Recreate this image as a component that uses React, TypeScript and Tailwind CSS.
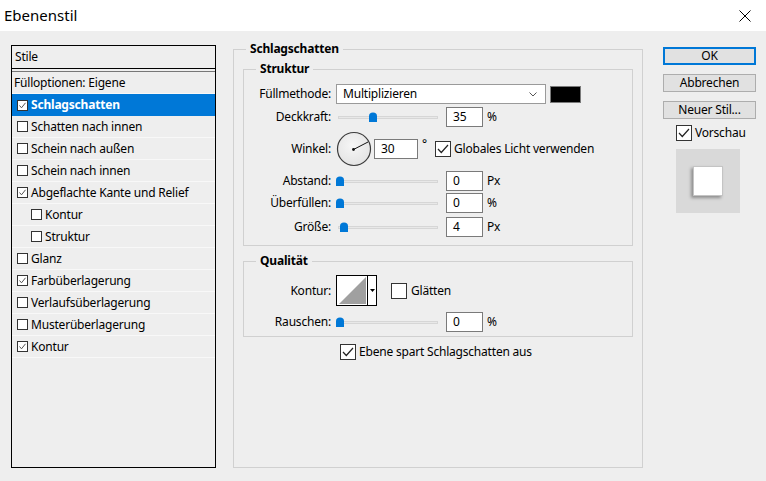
import React from "react";

function Box({ small = false, checked = false }: { small?: boolean; checked?: boolean }) {
  if (small) {
    return (
      <span className="inline-flex shrink-0 items-center justify-center w-[11px] h-[11px] bg-white border border-[#333333]">
        {checked && (
          <svg width="9" height="9" viewBox="0 0 9 9">
            <polyline points="1.5,4.5 3.5,6.8 7.5,1.8" fill="none" stroke="#555555" strokeWidth="1" />
          </svg>
        )}
      </span>
    );
  }
  return (
    <span className="inline-flex shrink-0 items-center justify-center w-[16px] h-[16px] bg-white border border-[#333333]">
      {checked && (
        <svg width="14" height="14" viewBox="0 0 14 14">
          <polyline points="2,7 5.3,10.5 12,3" fill="none" stroke="#222222" strokeWidth="1.2" />
        </svg>
      )}
    </span>
  );
}

function Slider({ pos }: { pos: number }) {
  return (
    <div className="relative w-[102px] h-[20px] flex items-center shrink-0">
      <div className="ml-[2px] w-[100px] h-[3px] bg-[#e8e8e8] border border-[#d6d6d6]" />
      <svg className="absolute top-[5px]" style={{ left: pos }} width="8" height="10" viewBox="0 0 8 10">
        <path d="M0 4 Q0 0.5 4 0.5 Q8 0.5 8 4 V10 H0 Z" fill="#0078d7" />
      </svg>
    </div>
  );
}

function NumInput({ value, w = "w-[37px]" }: { value: string; w?: string }) {
  return (
    <div className={`${w} h-[20px] bg-white border border-[#7a7a7a] pl-[6px] flex items-center shrink-0 leading-none`}>
      {value}
    </div>
  );
}

function Row({ label, className, children }: { label: string; className: string; children: React.ReactNode }) {
  return (
    <div className={`flex items-center ${className}`}>
      <span className="w-[87px] text-right shrink-0">{label}</span>
      <div className="ml-[5px] flex items-center">{children}</div>
    </div>
  );
}

const items: { label: string; checked?: boolean; indent?: boolean; selected?: boolean }[] = [
  { label: "Schlagschatten", checked: true, selected: true },
  { label: "Schatten nach innen" },
  { label: "Schein nach außen" },
  { label: "Schein nach innen" },
  { label: "Abgeflachte Kante und Relief", checked: true },
  { label: "Kontur", indent: true },
  { label: "Struktur", indent: true },
  { label: "Glanz" },
  { label: "Farbüberlagerung", checked: true },
  { label: "Verlaufsüberlagerung" },
  { label: "Musterüberlagerung" },
  { label: "Kontur", checked: true },
];

function LeftList() {
  return (
    <div className="mt-[14px] w-[205px] h-[423px] border border-black flex flex-col shrink-0">
      <div className="h-[22px] pl-[3px] flex items-center">Stile</div>
      <div className="h-[1px] bg-black" />
      <div className="h-[2px]" />
      <div className="h-[1px] bg-[#777777]" />
      <div className="h-[22px] pl-[2px] flex items-center border-b border-[#f8f8f8]">Fülloptionen: Eigene</div>
      {items.map((it, i) => (
        <div
          key={i}
          className={`h-[22px] flex items-center ${it.indent ? "pl-[19px]" : "pl-[5px]"} ${
            it.selected ? "bg-[#0078d7] text-white font-bold" : "border-b border-[#f8f8f8]"
          }`}
        >
          <Box small checked={it.checked} />
          <span className="ml-[3px]">{it.label}</span>
        </div>
      ))}
    </div>
  );
}

function Middle() {
  return (
    <fieldset className="ml-[17px] mt-[10px] w-[410px] h-[427px] border border-[#d0d0d0] px-[9px] shrink-0">
      <legend className="ml-[3px] px-[4px] font-bold leading-[16px]">Schlagschatten</legend>
      <fieldset className="mt-[4px] border border-[#d0d0d0] pb-[8px]">
        <legend className="ml-[12px] px-[4px] font-bold leading-[16px]">Struktur</legend>
        <Row label="Füllmethode:" className="mt-[7px] h-[20px]">
          <div className="w-[210px] h-[20px] bg-white border border-[#9a9a9a] pl-[6px] pr-[8px] flex items-center justify-between">
            <span>Multiplizieren</span>
            <svg width="8" height="5" viewBox="0 0 8 5">
              <polyline points="0.5,0.5 4,4 7.5,0.5" fill="none" stroke="#555555" strokeWidth="1" />
            </svg>
          </div>
          <div className="ml-[4px] w-[31px] h-[17px] bg-black border border-[#7a7a7a]" />
        </Row>
        <Row label="Deckkraft:" className="mt-[3px] h-[20px]">
          <Slider pos={33} />
          <div className="ml-[8px]">
            <NumInput value="35" />
          </div>
          <span className="ml-[4px]">%</span>
        </Row>
        <Row label="Winkel:" className="mt-[4px] h-[35px]">
          <svg width="36" height="36" viewBox="0 0 36 36" className="shrink-0">
            <defs>
              <radialGradient id="dg" cx="0.45" cy="0.4" r="0.6">
                <stop offset="0" stopColor="#f6f6f6" />
                <stop offset="1" stopColor="#e4e4e4" />
              </radialGradient>
            </defs>
            <circle cx="18" cy="18" r="16.5" fill="url(#dg)" stroke="#3c3c3c" strokeWidth="1.2" />
            <line x1="17.5" y1="18.5" x2="32" y2="11" stroke="#111111" strokeWidth="1" />
            <circle cx="17.5" cy="18.5" r="1.4" fill="#111111" />
          </svg>
          <div className="ml-[2px]">
            <NumInput value="30" w="w-[44px]" />
          </div>
          <span className="ml-[4px] w-[13px] self-start mt-[7px] leading-none">°</span>
          <Box checked />
          <span className="ml-[3px]">Globales Licht verwenden</span>
        </Row>
        <Row label="Abstand:" className="mt-[5px] h-[20px]">
          <Slider pos={0} />
          <div className="ml-[8px]">
            <NumInput value="0" />
          </div>
          <span className="ml-[4px]">Px</span>
        </Row>
        <Row label="Überfüllen:" className="mt-[2px] h-[20px]">
          <Slider pos={0} />
          <div className="ml-[8px]">
            <NumInput value="0" />
          </div>
          <span className="ml-[4px]">%</span>
        </Row>
        <Row label="Größe:" className="mt-[4px] h-[20px]">
          <Slider pos={4} />
          <div className="ml-[8px]">
            <NumInput value="4" />
          </div>
          <span className="ml-[4px]">Px</span>
        </Row>
      </fieldset>
      <fieldset className="mt-[7px] border border-[#d0d0d0] pb-[4px]">
        <legend className="ml-[12px] px-[4px] font-bold leading-[16px]">Qualität</legend>
        <Row label="Kontur:" className="mt-[6px] h-[31px]">
          <div className="w-[41px] h-[31px] border border-black bg-white flex">
            <svg width="30" height="29" viewBox="0 0 30 29" className="shrink-0">
              <rect x="0" y="0" width="30" height="29" fill="#ffffff" />
              <polygon points="2,28 29,1 29,28" fill="#a0a0a0" />
            </svg>
            <div className="w-[9px] border-l border-black flex items-center justify-center">
              <svg width="5" height="3" viewBox="0 0 5 3">
                <polygon points="0,0 5,0 2.5,3" fill="#000000" />
              </svg>
            </div>
          </div>
          <div className="ml-[14px] flex items-center">
            <Box />
            <span className="ml-[4px]">Glätten</span>
          </div>
        </Row>
        <Row label="Rauschen:" className="mt-[6px] h-[20px]">
          <Slider pos={0} />
          <div className="ml-[8px]">
            <NumInput value="0" />
          </div>
          <span className="ml-[4px]">%</span>
        </Row>
      </fieldset>
      <div className="mt-[7px] ml-[97px] flex items-center h-[16px]">
        <Box checked />
        <span className="ml-[3px]">Ebene spart Schlagschatten aus</span>
      </div>
    </fieldset>
  );
}

function Right() {
  return (
    <div className="ml-[20px] mt-[16px] w-[93px] flex flex-col shrink-0">
      <div className="h-[18px] border-2 border-[#0078d7] bg-[#e1e1e1] flex items-center justify-center leading-none">OK</div>
      <div className="mt-[9px] h-[18px] border border-[#adadad] bg-[#e1e1e1] flex items-center justify-center leading-none">Abbrechen</div>
      <div className="mt-[9px] h-[18px] border border-[#adadad] bg-[#e1e1e1] flex items-center justify-center leading-none">Neuer Stil...</div>
      <div className="mt-[6px] pl-[13px] flex items-center h-[16px]">
        <Box checked />
        <span className="ml-[3px]">Vorschau</span>
      </div>
      <div className="mt-[8px] ml-[13px] w-[64px] h-[64px] bg-[#d9d9d9] flex items-center justify-center">
        <div className="w-[30px] h-[30px] bg-white border border-[#c4c4c4] shadow-[-2px_2px_3px_rgba(0,0,0,0.35)]" />
      </div>
    </div>
  );
}

export default function App() {
  return (
    <div className="w-[766px] h-[481px] bg-[#eeeeee] flex flex-col font-['Noto_Sans',sans-serif] text-[12px] tracking-[-0.2px] text-black overflow-hidden">
      <div className="h-[31px] bg-white flex items-center justify-between shrink-0">
        <span className="pl-[4px] text-[15px] tracking-normal">Ebenenstil</span>
        <svg className="mr-[15px]" width="12" height="12" viewBox="0 0 12 12">
          <line x1="0.5" y1="0.5" x2="11.5" y2="11.5" stroke="#000000" strokeWidth="1" />
          <line x1="11.5" y1="0.5" x2="0.5" y2="11.5" stroke="#000000" strokeWidth="1" />
        </svg>
      </div>
      <div className="flex flex-1 pl-[11px]">
        <LeftList />
        <Middle />
        <Right />
      </div>
    </div>
  );
}
